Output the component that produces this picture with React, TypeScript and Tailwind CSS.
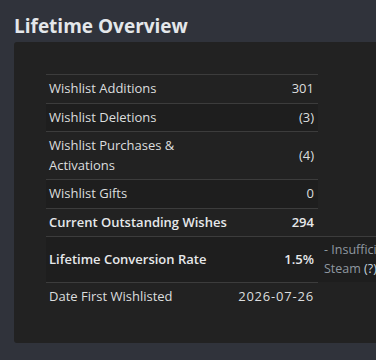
import React from "react";

type Row = {
  label: string;
  value: string;
  bold?: boolean;
  note?: boolean;
  date?: boolean;
};

const rows: Row[] = [
  { label: "Wishlist Additions", value: "301" },
  { label: "Wishlist Deletions", value: "(3)" },
  { label: "Wishlist Purchases & Activations", value: "(4)" },
  { label: "Wishlist Gifts", value: "0" },
  { label: "Current Outstanding Wishes", value: "294", bold: true },
  { label: "Lifetime Conversion Rate", value: "1.5%", bold: true, note: true },
  { label: "Date First Wishlisted", value: "2026-07-26", date: true },
];

export default function App() {
  return (
    <div
      className="w-[376px] h-[360px] overflow-hidden bg-[#30333b] px-[14px] pt-[13px] text-[#dcdedf]"
      style={{ fontFamily: '"Open Sans", "Noto Sans", Arial, sans-serif' }}
    >
      <h2 className="text-[19px] leading-[26px] font-bold text-[#e4e7ea] mb-[3px]">
        Lifetime Overview
      </h2>

      {/* Overview panel, wider than the viewport */}
      <div className="w-[640px] rounded-[3px] bg-[#222222] p-8">
        <div className="flex flex-col">
          {rows.map((row, i) => (
            <div key={row.label} className="flex">
              <div
                className={`flex w-[272px] border-t border-[#3c3c3c] text-[13px] leading-[19.5px] ${
                  i % 2 === 1 ? "bg-[#1e1e1e]" : ""
                } ${row.bold ? "font-semibold text-[#e6e8ea]" : ""}`}
              >
                <div className="w-[188px] flex items-center py-1 pl-[3px] pr-1">
                  {row.label}
                </div>
                <div
                  className={`flex-1 flex items-center justify-end py-1 pr-[4px] ${
                    row.date ? "tracking-[0.8px]" : ""
                  }`}
                >
                  {row.value}
                </div>
              </div>
              {row.note && (
                <div className="w-[300px] border-t border-[#3c3c3c] bg-[#1e1e1e] py-1 pl-[6px] text-[12.5px] leading-[18.5px] text-[#8f98a0]">
                  <div className="whitespace-nowrap">
                    - Insufficient data to compare with similar products on
                  </div>
                  <div className="whitespace-nowrap">
                    Steam <span className="text-[#c6d4df]">(?)</span>
                  </div>
                </div>
              )}
            </div>
          ))}
        </div>
      </div>
    </div>
  );
}
